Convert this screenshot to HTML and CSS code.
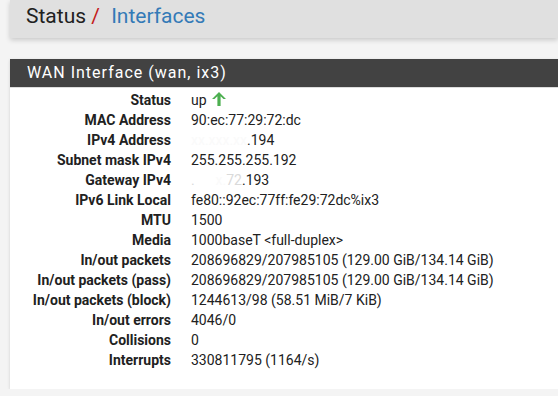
FILE: index.html
```html
<!DOCTYPE html>
<html lang="en">
<head>
  <meta charset="UTF-8" />
  <title>Status / Interfaces</title>
  <link rel="stylesheet" href="styles.css">
</head>
<body>
  <div class="page-header">
    <h1>Status <span class="sep">/</span> <a href="#">Interfaces</a></h1>
  </div>

  <div class="panel">
    <div class="panel-heading">WAN Interface (wan, ix3)</div>
    <dl class="details">
      <dt>Status</dt>
      <dd>up <svg class="up" width="16" height="14" viewBox="0 0 16 14"><path d="M8 0 L15 7 L12.5 7 L9.6 4.2 L9.6 14 L6.4 14 L6.4 4.2 L3.5 7 L1 7 Z" fill="#4caf50"/></svg></dd>
      <dt>MAC Address</dt>
      <dd>90:ec:77:29:72:dc</dd>
      <dt>IPv4 Address</dt>
      <dd><span class="masked">xx.xxx.xx</span>.194</dd>
      <dt>Subnet mask IPv4</dt>
      <dd>255.255.255.192</dd>
      <dt>Gateway IPv4</dt>
      <dd><span class="faint">.</span>&nbsp;&nbsp;&nbsp;&nbsp;&nbsp;&nbsp;<span class="masked">x.</span><span class="faint">72</span>.193</dd>
      <dt>IPv6 Link Local</dt>
      <dd>fe80::92ec:77ff:fe29:72dc%ix3</dd>
      <dt>MTU</dt>
      <dd>1500</dd>
      <dt>Media</dt>
      <dd>1000baseT &lt;full-duplex&gt;</dd>
      <dt>In/out packets</dt>
      <dd>208696829/207985105 (129.00 GiB/134.14 GiB)</dd>
      <dt>In/out packets (pass)</dt>
      <dd>208696829/207985105 (129.00 GiB/134.14 GiB)</dd>
      <dt>In/out packets (block)</dt>
      <dd>1244613/98 (58.51 MiB/7 KiB)</dd>
      <dt>In/out errors</dt>
      <dd>4046/0</dd>
      <dt>Collisions</dt>
      <dd>0</dd>
      <dt>Interrupts</dt>
      <dd>330811795 (1164/s)</dd>
    </dl>
  </div>
</body>
</html>
```

FILE: styles.css
```css
body {
  margin: 0;
  background: #f4f4f4;
  font-family: Roboto, "Liberation Sans", sans-serif;
  color: #212121;
  overflow: hidden;
}

.page-header {
  margin-left: 10px;
  height: 38px;
  background: #e0e0e0;
  box-shadow: 0 2px 5px rgba(0,0,0,0.18);
}
.page-header h1 {
  margin: 0;
  padding: 2px 0 0 16px;
  font-size: 21px;
  font-weight: 400;
  line-height: 28px;
  color: #212121;
}
.page-header .sep { color: #c41b1b; margin: 0 4px 0 0; }
.page-header a { color: #337ab7; text-decoration: none; margin-left: 2px; }

.panel {
  margin: 21px 0 0 10px;
  width: 560px;
  background: #fff;
  box-shadow: 0 1px 3px rgba(0,0,0,0.15);
}
.panel-heading {
  background: #424242;
  color: #fff;
  height: 28px;
  line-height: 28px;
  padding-left: 17px;
  font-size: 16px;
  letter-spacing: 1px;
  border-bottom: 1px solid #ddd;
}

.details {
  display: grid;
  grid-template-columns: 161px 1fr;
  column-gap: 20px;
  margin: 0;
  padding: 2px 0 19px;
  font-size: 14px;
  line-height: 20px;
}
.details dt { text-align: right; font-weight: 700; }
.details dd { margin: 0; white-space: nowrap; }
.details .up { vertical-align: -1px; margin-left: 1px; }
.masked { color: #fafafa; }
.faint { color: #dadada; }
```
